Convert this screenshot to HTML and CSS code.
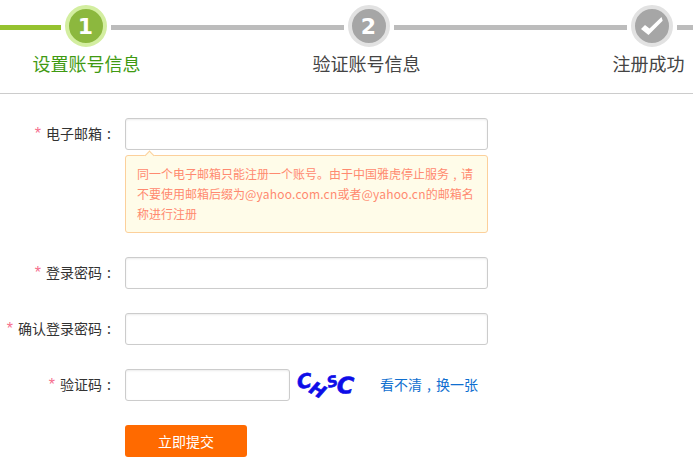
FILE: index.html
```html
<!DOCTYPE html>
<html lang="zh-CN">
<head>
    <meta charset="UTF-8">
    <meta name="viewport" content="width=device-width, initial-scale=1.0">
    <title>注册</title>
    <link rel="stylesheet" href="styles.css">
</head>
<body>
    <div class="steps-box">
        <div class="steps">
            <div class="step active">
                <div class="step-head">
                    <span class="step-line"></span>
                    <span class="step-num">1</span>
                    <span class="step-line next"></span>
                </div>
                <div class="step-name">设置账号信息</div>
            </div>
            <div class="step">
                <div class="step-head">
                    <span class="step-line"></span>
                    <span class="step-num">2</span>
                    <span class="step-line"></span>
                </div>
                <div class="step-name">验证账号信息</div>
            </div>
            <div class="step">
                <div class="step-head">
                    <span class="step-line"></span>
                    <span class="step-num">
                        <svg class="check" width="24" height="20" viewBox="0 0 24 20"><path d="M1 13 L5 9 L9.5 12.5 L21.5 1 L22.7 4.7 L8.5 19 Z" fill="#fff"/></svg>
                    </span>
                    <span class="step-line"></span>
                </div>
                <div class="step-name">注册成功</div>
            </div>
        </div>
    </div>

    <form class="reg-form">
        <div class="form-row first">
            <label class="form-label"><em>*</em> 电子邮箱<span class="punct">:</span></label>
            <input class="form-input" type="text">
        </div>
        <div class="tip">同一个电子邮箱只能注册一个账号。由于中国雅虎停止服务<span class="punct">,</span>请<br>不要使用邮箱后缀为<span class="latin">@yahoo.com.cn</span>或者<span class="latin">@yahoo.cn</span>的邮箱名<br>称进行注册</div>
        <div class="form-row">
            <label class="form-label"><em>*</em> 登录密码<span class="punct">:</span></label>
            <input class="form-input" type="password">
        </div>
        <div class="form-row">
            <label class="form-label"><em>*</em> 确认登录密码<span class="punct">:</span></label>
            <input class="form-input" type="password">
        </div>
        <div class="form-row">
            <label class="form-label"><em>*</em> 验证码<span class="punct">:</span></label>
            <input class="form-input short" type="text">
            <svg class="captcha" width="60" height="44" viewBox="0 -6 60 44">
                <text x="2" y="19" font-size="20" transform="rotate(-6 9 13)">C</text>
                <text x="15" y="27" font-size="18" transform="rotate(30 22 21)">H</text>
                <text x="32" y="18" font-size="15" transform="rotate(-15 37 13)">S</text>
                <text x="42" y="24" font-size="23" transform="rotate(5 48 16)">C</text>
            </svg>
            <a class="refresh" href="#">看不清<span class="punct">,</span>换一张</a>
        </div>
        <div class="form-row submit-row">
            <button class="submit-btn" type="button">立即提交</button>
        </div>
    </form>
</body>
</html>
```

FILE: styles.css
```css
body {
    margin: 0;
    height: 463px;
    overflow: hidden;
    background: #fff;
    color: #333;
    font-family: "Noto Sans CJK SC", "Liberation Sans", sans-serif;
    font-size: 14px;
}
.steps-box {
    height: 93px;
    border-bottom: 1px solid #ccc;
    overflow: hidden;
}
.steps {
    display: flex;
    width: 849px;
    margin-left: -56px;
    padding-top: 5px;
}
.step {
    width: 283px;
    text-align: center;
    color: #444;
}
.step-head {
    display: flex;
    align-items: center;
    gap: 4px;
}
.step-line {
    flex: 1;
    height: 5px;
    margin-top: 2px;
    background: #bcbcbc;
}
.step-num {
    box-sizing: border-box;
    display: flex;
    align-items: center;
    justify-content: center;
    width: 42px;
    height: 42px;
    border: 4px solid #e2e2e2;
    border-radius: 50%;
    background: #a6a6a6;
    color: #fff;
    font-family: "DejaVu Sans", sans-serif;
    font-size: 22px;
    font-weight: bold;
}
.step-name {
    margin-top: 4px;
    font-size: 18px;
    line-height: 24px;
}
.step:nth-child(1) .step-name {
    padding-left: 2px;
}
.step:nth-child(2) .step-name {
    padding-right: 4px;
}
.step:nth-child(3) .step-name {
    padding-right: 6px;
}
.active .step-line {
    background: #95c22f;
}
.active .step-line.next {
    background: #bcbcbc;
}
.active .step-num {
    border-color: #d3eea0;
    background: #8cb83e;
}
.active .step-name {
    color: #3f9a12;
}
.reg-form {
    padding-top: 24px;
}
.form-row {
    display: flex;
    align-items: center;
    height: 32px;
    margin-top: 24px;
}
.form-row.first {
    margin-top: 0;
}
.form-label {
    width: 116px;
    margin-right: 9px;
    padding-bottom: 2px;
    text-align: right;
    white-space: nowrap;
}
.form-label em {
    margin-right: 2px;
    color: #f66f8d;
    font-family: "Liberation Sans", sans-serif;
    font-size: 16px;
    font-style: normal;
}
.punct {
    display: inline-block;
    width: 1em;
    text-align: center;
}
.form-input {
    box-sizing: border-box;
    width: 363px;
    height: 32px;
    padding: 0 8px;
    border: 1px solid #ccc;
    border-radius: 3px;
    box-shadow: inset 0 1px 2px rgba(0, 0, 0, 0.08);
    outline: none;
}
.form-input.short {
    width: 165px;
}
.tip {
    position: relative;
    box-sizing: border-box;
    width: 363px;
    height: 78px;
    margin: 5px 0 0 125px;
    padding: 8px 11px;
    border: 1px solid #fcd09b;
    border-radius: 3px;
    background: #fffce9;
    color: #ff8a70;
    font-size: 12px;
    line-height: 20px;
}
.tip::before {
    content: "";
    position: absolute;
    left: 20px;
    top: -4px;
    width: 6px;
    height: 6px;
    border-top: 1px solid #fcd09b;
    border-left: 1px solid #fcd09b;
    background: #fffce9;
    transform: rotate(45deg);
}
.latin {
    letter-spacing: 0.2px;
}
.captcha {
    margin: -6px 0 -6px 5px;
    fill: #0d0de8;
    stroke: #0d0de8;
    stroke-width: 0.6;
    font-family: "DejaVu Sans", sans-serif;
    font-weight: bold;
    font-style: italic;
}
.refresh {
    margin-left: 25px;
    padding-bottom: 2px;
    color: #0f6fd0;
    text-decoration: none;
}
.submit-row {
    padding-left: 125px;
}
.submit-btn {
    width: 122px;
    height: 32px;
    padding: 0;
    border: none;
    border-radius: 3px;
    background: #ff6a00;
    color: #fff;
    font-family: inherit;
    font-size: 14px;
}
```
